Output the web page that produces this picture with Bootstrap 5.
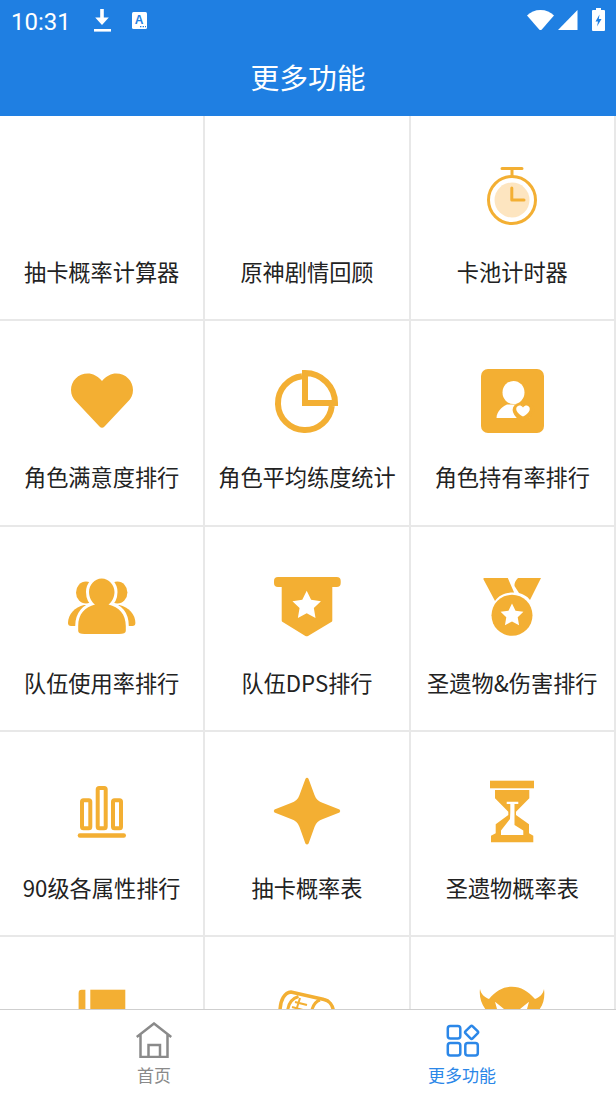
<!DOCTYPE html>
<html lang="zh-CN">
<head>
<meta charset="utf-8">
<title>更多功能</title>
<link href="https://cdn.jsdelivr.net/npm/bootstrap@5.3.0/dist/css/bootstrap.min.css" rel="stylesheet">
<style>
  body { font-family: "Noto Sans CJK SC", "Liberation Sans", sans-serif; background: #fff; }
  .app-top { background: #1f7fe2; color: #fff; }
  .status-strip { height: 40px; padding-left: 11px; }
  .status-time { font-family: Roboto, sans-serif; font-size: 24px; line-height: 1; width: 83px; margin-top: 3px; }
  .status-left { gap: 21px; }
  .status-right { margin-left: auto; }
  .status-dl { margin-top: 2px; }
  .status-input { margin-left: 21px; }
  .status-battery { margin: -2px 11px 0 14px; }
  .title-strip { height: 76px; font-size: 28.8px; line-height: 1; padding-bottom: 2px; }
  .tool-cell { aspect-ratio: 1 / 1; border-right: 2.5px solid #e8e8e8; border-bottom: 2px solid #e8e8e8; padding-top: 49px; text-align: center; }
  .tool-icon { display: block; width: 64px; height: 64px; margin-left: calc(50% - 31px); overflow: visible; fill: #f3af33; }
  .tool-label { margin-top: 26px; font-size: 22.2px; line-height: 32px; color: #222; white-space: nowrap; }
  .tab-strip { height: 86px; border-top: 1.5px solid #cfcfcf; background: #fff; flex-shrink: 0; z-index: 2; }
  .tab-item { padding-top: 12px; font-size: 17px; line-height: 24px; color: #8a8a8a; text-align: center; }
  .tab-item.is-current { color: #2b87e8; }
  .tab-icon { display: block; width: 36px; height: 36px; margin: 0 auto 5px; }
  .hollow { fill: none; stroke: #f3af33; }
  .paper { fill: #fff; }
</style>
</head>
<body>
<div class="d-flex flex-column vh-100 overflow-hidden">

  <header class="app-top flex-shrink-0">
    <div class="status-strip d-flex align-items-center">
      <div class="status-left d-flex align-items-center">
        <span class="status-time">10:31</span>
      </div>
      <svg class="status-dl" width="17" height="24" viewBox="0 0 17 24" fill="#fff" aria-hidden="true">
        <path d="M6.200 0h3.600v8.500h5L8 16 1.200 8.500h5z"/><rect x="0" y="20" width="17" height="2.600"/>
      </svg>
      <svg class="status-input" width="15" height="17" viewBox="0 0 15 17" aria-hidden="true">
        <rect width="15" height="17" rx="1.500" fill="#fff"/>
        <text x="7.200" y="11.500" text-anchor="middle" font-family="Liberation Sans" font-weight="700" font-size="12" fill="#1f7fe2">A</text>
        <path d="M8 14.600h1.400M10.600 14.600h1.400M13 14.600h1" stroke="#1f7fe2" stroke-width="1.200"/>
      </svg>
      <div class="status-right d-flex align-items-center">
        <svg width="27" height="20" viewBox="0 0 27 20" fill="#fff" aria-hidden="true">
          <path d="M0 5.500C3.500 2 8 0 13.500 0S23.500 2 27 5.500L14.800 19.500q-1.300 1-2.600 0z"/>
        </svg>
        <svg class="ms-1" width="20" height="20" viewBox="0 0 20 20" fill="#fff" aria-hidden="true">
          <path d="M19.500 0v20H0z"/>
        </svg>
        <svg class="status-battery" width="13" height="23" viewBox="0 0 13 23" fill="#fff" aria-hidden="true">
          <path d="M4 0h5v2h3q1 0 1 1v19q0 1-1 1H1q-1 0-1-1V3q0-1 1-1h3z"/>
          <path d="M7.500 6.500 3.500 13.500h2.500l-1 5 4.500-7.500H6.800z" fill="#1f7fe2"/>
        </svg>
      </div>
    </div>
    <div class="title-strip d-flex align-items-center justify-content-center">更多功能</div>
  </header>

  <main class="flex-grow-1 overflow-hidden">
    <div class="row g-0">

      <div class="col-4"><div class="tool-cell">
        <svg class="tool-icon" viewBox="0 0 64 64"></svg>
        <div class="tool-label">抽卡概率计算器</div>
      </div></div>

      <div class="col-4"><div class="tool-cell">
        <svg class="tool-icon" viewBox="0 0 64 64"></svg>
        <div class="tool-label">原神剧情回顾</div>
      </div></div>

      <div class="col-4"><div class="tool-cell">
        <svg class="tool-icon" viewBox="0 0 64 64">
          <circle cx="31" cy="35" r="17.500" fill="#fde5c0"/>
          <circle class="hollow" cx="31" cy="35" r="23.500" stroke-width="3"/>
          <path class="hollow" d="M21 3.500h20M31 3.500V11M30.800 23v12H43" stroke-width="3" stroke-linecap="round" stroke-linejoin="round"/>
        </svg>
        <div class="tool-label">卡池计时器</div>
      </div></div>

      <div class="col-4"><div class="tool-cell">
        <svg class="tool-icon" viewBox="0 0 64 64">
          <path d="M31 11C27 6 21.500 3.500 17 3.500 7 3.500 0 11 0 20c0 5 2 8.500 5 11.500l23.500 25q2.500 2.500 5 0L57 31.500c3-3 5-6.500 5-11.500 0-9-7-16.500-17-16.500-4.500 0-10 2.500-14 7.500z"/>
        </svg>
        <div class="tool-label">角色满意度排行</div>
      </div></div>

      <div class="col-4"><div class="tool-cell">
        <svg class="tool-icon" viewBox="0 0 64 64">
          <path class="hollow" d="M26 6.200A27 27 0 1 0 55.800 36" stroke-width="6"/>
          <path class="hollow" d="M29 33V3A30 30 0 0 1 59 33z" stroke-width="6"/>
        </svg>
        <div class="tool-label">角色平均练度统计</div>
      </div></div>

      <div class="col-4"><div class="tool-cell">
        <svg class="tool-icon" viewBox="0 0 64 64">
          <rect x="0" y="-1" width="63" height="64" rx="7"/>
          <ellipse class="paper" cx="32.500" cy="22.500" rx="11" ry="11.500"/>
          <path class="paper" d="M15.500 48c0-6 5-11 10.500-13.500h13C44 36 49 42 49 48z"/>
          <path d="M42 37c-2-2.500-4-2.500-6-2-3 1-4 4-3 7 1 3 5 7 9 9 4-2 8-5 10-9 1-3 0-6-3-7-2-.5-5 0-7 2z" stroke="#f3af33" stroke-width="2"/>
          <path class="paper" d="M42 37.500c-1.500-1.800-3-2.200-4.500-1.700-2 .7-2.700 2.700-2 4.700.8 2.500 4 4.800 6.500 6 2.500-1.200 5.700-3.500 6.500-6 .7-2 0-4-2-4.700-1.500-.5-3 0-4.500 1.700z"/>
        </svg>
        <div class="tool-label">角色持有率排行</div>
      </div></div>

      <div class="col-4"><div class="tool-cell">
        <svg class="tool-icon" viewBox="0 0 64 64">
          <g>
            <ellipse cx="15" cy="16.500" rx="10" ry="11"/>
            <path d="M-3 47c0-9 7-16 16-18h17v21H0q-3 0-3-3z"/>
          </g>
          <g transform="matrix(-1 0 0 1 61.400 0)">
            <ellipse cx="15" cy="16.500" rx="10" ry="11"/>
            <path d="M-3 47c0-9 7-16 16-18h17v21H0q-3 0-3-3z"/>
          </g>
          <path d="M30.700 2.500c7.300 0 12.800 6.500 12.800 13.500 0 5-2.500 10-6 12.500C48 31 54.800 38 54.800 50v5q0 3-6.800 3H13.500q-6.300 0-6.300-3v-5c0-12 6.800-19 16.800-21.500-3.500-2.500-6-7.500-6-12.500 0-7 5.500-13.500 12.700-13.500z" stroke="#fff" stroke-width="6" paint-order="stroke"/>
        </svg>
        <div class="tool-label">队伍使用率排行</div>
      </div></div>

      <div class="col-4"><div class="tool-cell">
        <svg class="tool-icon" viewBox="0 0 64 64">
          <rect x="-2" y="1" width="66.700" height="10" rx="4"/>
          <path d="M5.700 8h50.600v36.500q0 1-1 1.500L32 60q-1.300.6-2.600 0L6.700 46q-1-.5-1-1.500z"/>
          <polygon class="paper" transform="translate(30.700 29.800) scale(1.500)" points="0,-10 2.940,-4.050 9.510,-3.090 4.760,1.550 5.880,8.090 0,5 -5.880,8.090 -4.760,1.550 -9.510,-3.090 -2.940,-4.050"/>
        </svg>
        <div class="tool-label">队伍DPS排行</div>
      </div></div>

      <div class="col-4"><div class="tool-cell">
        <svg class="tool-icon" viewBox="0 0 64 64">
          <path d="M2.300 3 2.800 2h24l6.300 14.600C25 16.500 18 19 14 25z"/>
          <path d="M37 2h23L49 24c-3-4-7-6-11-7l-4.500-7Q33 6 37 2z"/>
          <circle cx="31" cy="39.300" r="20.500"/>
          <polygon class="paper" transform="translate(31 39.500) scale(1.200)" points="0,-10 2.940,-4.050 9.510,-3.090 4.760,1.550 5.880,8.090 0,5 -5.880,8.090 -4.760,1.550 -9.510,-3.090 -2.940,-4.050"/>
        </svg>
        <div class="tool-label">圣遗物&amp;伤害排行</div>
      </div></div>

      <div class="col-4"><div class="tool-cell">
        <svg class="tool-icon" viewBox="0 0 64 64">
          <rect class="hollow" x="11" y="19.300" width="8.300" height="28" rx="1.500" stroke-width="4"/>
          <rect class="hollow" x="26.700" y="7" width="8" height="40.300" rx="1.500" stroke-width="4"/>
          <rect class="hollow" x="42" y="19.300" width="8" height="28" rx="1.500" stroke-width="4"/>
          <rect x="6.700" y="52.300" width="48.300" height="4.400" rx="2.200"/>
        </svg>
        <div class="tool-label">90级各属性排行</div>
      </div></div>

      <div class="col-4"><div class="tool-cell">
        <svg class="tool-icon" viewBox="0 0 64 64">
          <path d="M31-3.300Q32-3.300 32.600-2L38.500 14Q40.500 20 47 22L63.500 28.500Q65 30 63.500 31.500L47 38Q40.500 40 38.500 46L32.600 62.500Q31 64.500 29.400 62.500L23.500 46Q21.500 40 15 38L-1.500 31.500Q-3 30-1.500 28.500L15 22Q21.500 20 23.500 14L29.400-2Q30-3.300 31-3.300z"/>
        </svg>
        <div class="tool-label">抽卡概率表</div>
      </div></div>

      <div class="col-4"><div class="tool-cell">
        <svg class="tool-icon" viewBox="0 0 64 64">
          <rect x="9" y="-.3" width="44" height="7.600"/>
          <path fill-rule="evenodd" d="M14 9h34.300v8.300L35 30.700v3.300l13 9.300v9l4.300 2.400v6.600H10v-6.600l4.700-2.400v-9l12.600-9.300v-3.300L14 17.300zM25.700 20.700V23h3.600v8.500L29 38 20 49.500V54h22.300v-4.500L33.500 44V23h3.800v-2.300z"/>
        </svg>
        <div class="tool-label">圣遗物概率表</div>
      </div></div>

      <div class="col-4"><div class="tool-cell">
        <svg class="tool-icon" viewBox="0 0 64 64">
          <path d="M7.600 7q0-3.300 3-3.300h3.800V60H7.600z"/>
          <rect x="19.300" y="3.700" width="35" height="57"/>
        </svg>
      </div></div>

      <div class="col-4"><div class="tool-cell">
        <svg class="tool-icon" viewBox="0 0 64 64">
          <path class="hollow" d="M4 26C4 13 9 6.500 15 6L48 13.500C53 14.500 57 19 57.500 26" stroke-width="3.500"/>
          <path class="hollow" d="M11.500 26C12 18 16 12.500 22.500 10.500M35.500 26C36.500 20 39.500 15.500 44 14" stroke-width="3"/>
          <path class="hollow" d="M19 16l12 3M16 21l11 3M24 12l-5 16" stroke-width="2"/>
        </svg>
      </div></div>

      <div class="col-4"><div class="tool-cell">
        <svg class="tool-icon" viewBox="0 0 64 64">
          <path d="M-1 3C-2 10 0 18 5 24V40H58V24C63 18 64 10 63 3 62 8 59 11 54 13 47 5 40 .7 31 .7 22 .7 15 5 8 13 3 11 0 8-1 3z"/>
          <path class="paper" d="M14 15.700 23 23H16zM48 15.700 39 23H46z"/>
        </svg>
      </div></div>

    </div>
  </main>

  <nav class="tab-strip row g-0">
    <div class="col-6 tab-item">
      <svg class="tab-icon" viewBox="0 0 36 36" fill="none" stroke="#8a8a8a" stroke-width="2.500" aria-hidden="true">
        <path d="M.7 15 18 1.500 35.300 15M4.500 12.500V35h27V12.500M12.500 35V23h11.500v12"/>
      </svg>
      首页
    </div>
    <div class="col-6 tab-item is-current">
      <svg class="tab-icon" viewBox="0 0 36 36" fill="none" stroke="#2b87e8" stroke-width="2.500" aria-hidden="true">
        <rect x="3.800" y="4" width="12.500" height="12.500" rx="2.500"/>
        <rect x="3.800" y="21" width="12.500" height="12.500" rx="2.500"/>
        <rect x="21.300" y="21" width="12.500" height="12.500" rx="2.500"/>
        <rect x="22.600" y="5.300" width="10" height="10" rx="1.500" transform="rotate(45 27.600 10.300)"/>
      </svg>
      更多功能
    </div>
  </nav>

</div>
<script src="https://cdn.jsdelivr.net/npm/bootstrap@5.3.0/dist/js/bootstrap.bundle.min.js"></script>
</body>
</html>
